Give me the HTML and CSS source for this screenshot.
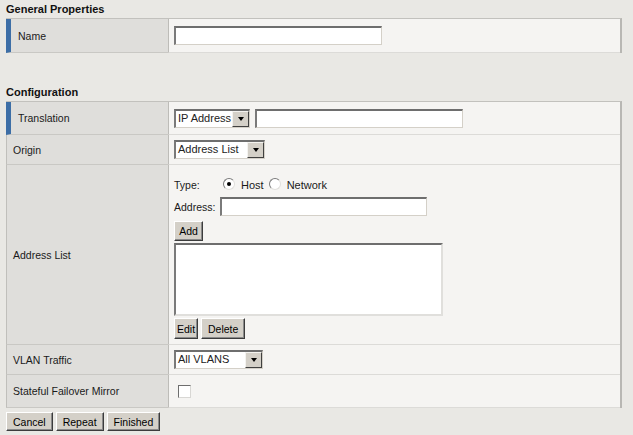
FILE: index.html
```html
<!DOCTYPE html>
<html>
<head>
<meta charset="utf-8">
<link rel="stylesheet" href="styles.css">
</head>
<body>
<div class="page">
  <div class="section-title">General Properties</div>
  <div class="props">
    <div class="row h-name">
      <div class="label marked">Name</div>
      <div class="value"><input class="text w-name" type="text"></div>
    </div>
  </div>

  <div class="section-title spaced">Configuration</div>
  <div class="props">
    <div class="row h-trans">
      <div class="label marked">Translation</div>
      <div class="value">
        <span class="select w-ip"><span class="select-text">IP Address</span><span class="select-btn"><span class="tri"></span></span></span>
        <input class="text w-trans" type="text">
      </div>
    </div>
    <div class="row h-std">
      <div class="label">Origin</div>
      <div class="value">
        <span class="select w-al"><span class="select-text">Address List</span><span class="select-btn"><span class="tri"></span></span></span>
      </div>
    </div>
    <div class="row">
      <div class="label">Address List</div>
      <div class="value stack">
        <div class="type-line">
          <span class="type-label">Type:</span>
          <span class="radio checked"></span><span class="radio-text">Host</span>
          <span class="radio"></span><span class="radio-text">Network</span>
        </div>
        <div class="addr-line">
          <span class="addr-label">Address:</span><input class="text w-addr" type="text">
        </div>
        <div><button class="btn btn-add">Add</button></div>
        <div class="listbox"></div>
        <div class="btn-line"><button class="btn btn-small">Edit</button><button class="btn">Delete</button></div>
      </div>
    </div>
    <div class="row h-std">
      <div class="label">VLAN Traffic</div>
      <div class="value">
        <span class="select w-vlan"><span class="select-text">All VLANS</span><span class="select-btn"><span class="tri"></span></span></span>
      </div>
    </div>
    <div class="row h-last">
      <div class="label">Stateful Failover Mirror</div>
      <div class="value"><span class="checkbox"></span></div>
    </div>
  </div>

  <div class="actions">
    <button class="btn">Cancel</button>
    <button class="btn">Repeat</button>
    <button class="btn">Finished</button>
  </div>
</div>
</body>
</html>
```

FILE: styles.css
```css
html, body {
  margin: 0;
  padding: 0;
  background: #e9e8e4;
}

body {
  font-family: "Liberation Sans", Arial, sans-serif;
  font-size: 10.5px;
  color: #1a1a1a;
}

.page {
  width: 616px;
  padding: 0 0 0 6px;
}

.section-title {
  font-size: 11px;
  font-weight: bold;
  color: #111;
  height: 18px;
  line-height: 18px;
}

.section-title.spaced {
  margin-top: 30px;
}

.props {
  border-top: 1px solid #c2c1bd;
  border-right: 2px solid #b8b7b3;
  background: #f5f4f2;
}

.row {
  display: grid;
  grid-template-columns: 162px 1fr;
}

.h-name { min-height: 34px; }
.h-trans { min-height: 33px; }
.h-std { min-height: 30px; }
.h-last { min-height: 33px; }

.label {
  background: #dfdedb;
  border-left: 1px solid #c0bfbb;
  border-bottom: 1px solid #c9c8c4;
  padding-left: 6px;
  display: flex;
  align-items: center;
}

.label.marked {
  border-left: 5px solid #3d6ea6;
  padding-left: 7px;
}

.value {
  border-left: 1px solid #bdbcb8;
  border-bottom: 1px solid #dcdbd8;
  padding-left: 5px;
  display: flex;
  align-items: center;
  gap: 5px;
}

.value.stack {
  flex-direction: column;
  align-items: flex-start;
  gap: 0;
  padding-top: 11px;
  padding-bottom: 5px;
}

.text {
  appearance: none;
  box-sizing: border-box;
  height: 19px;
  margin: 0;
  padding: 0 2px;
  background: #fff;
  border-style: solid;
  border-width: 2px 1px 1px 2px;
  border-color: #6e6e6e #d4d0c8 #d4d0c8 #7a7a7a;
  font: inherit;
}

.w-name { width: 208px; }
.w-trans { width: 208px; }
.w-addr { width: 207px; }

.select {
  box-sizing: border-box;
  height: 19px;
  display: inline-flex;
  align-items: stretch;
  background: #fff;
  border-style: solid;
  border-width: 2px 1px 1px 2px;
  border-color: #6e6e6e #d4d0c8 #d4d0c8 #7a7a7a;
}

.w-ip { width: 76px; }
.w-al { width: 91px; }
.w-vlan { width: 89px; }

.select-text {
  flex: 1;
  padding-left: 2px;
  line-height: 15px;
  font-size: 11px;
  color: #222;
  white-space: nowrap;
  overflow: hidden;
}

.select-btn {
  width: 15px;
  background: #d4d0c8;
  border-style: solid;
  border-width: 1px;
  border-color: #f4f3f0 #404040 #404040 #f4f3f0;
  display: flex;
  align-items: center;
  justify-content: center;
}

.tri {
  width: 0;
  height: 0;
  border-left: 3.5px solid transparent;
  border-right: 3.5px solid transparent;
  border-top: 4px solid #000;
}

.type-line {
  display: flex;
  align-items: center;
  height: 18px;
}

.type-label {
  width: 49px;
}

.radio {
  box-sizing: border-box;
  width: 12px;
  height: 12px;
  border-radius: 50%;
  background: #fff;
  border: 1px solid;
  border-color: #7a7a7a #e0dfdc #e0dfdc #7a7a7a;
  position: relative;
  margin-top: -3px;
}

.radio.checked::after {
  content: "";
  position: absolute;
  left: 3px;
  top: 3px;
  width: 4px;
  height: 4px;
  border-radius: 50%;
  background: #000;
}

.radio-text {
  margin-left: 6px;
  margin-right: 5px;
  font-size: 11px;
}

.addr-line {
  display: flex;
  align-items: center;
  margin-top: 3px;
}

.addr-label {
  width: 46px;
}

.btn {
  box-sizing: border-box;
  height: 20px;
  margin: 0;
  padding: 0 6px;
  background: #d4d0c8;
  border: 1px solid;
  border-color: #ffffff #3c3c3c #3c3c3c #ffffff;
  box-shadow: inset -1px -1px 0 #8a8a8a;
  font: inherit;
  color: #000;
}

.btn-add {
  margin-top: 5px;
  width: 29px;
  padding: 0;
}

.listbox {
  box-sizing: border-box;
  margin-top: 2px;
  width: 269px;
  height: 73px;
  background: #fff;
  border-style: solid;
  border-width: 2px;
  border-color: #6e6e6e #e0dfdc #e0dfdc #7a7a7a;
}

.btn-line {
  display: flex;
  gap: 3px;
  margin-top: 2px;
}

.btn-line .btn {
  height: 21px;
}

.btn-small {
  width: 24px;
  padding: 0;
}

.checkbox {
  box-sizing: border-box;
  width: 13px;
  height: 13px;
  margin-left: 4px;
  background: #fff;
  border-style: solid;
  border-width: 1px;
  border-color: #6e6e6e #d8d7d4 #d8d7d4 #6e6e6e;
}

.actions {
  margin-top: 4px;
  display: flex;
  gap: 3px;
}

.actions .btn {
  height: 19px;
}
```
